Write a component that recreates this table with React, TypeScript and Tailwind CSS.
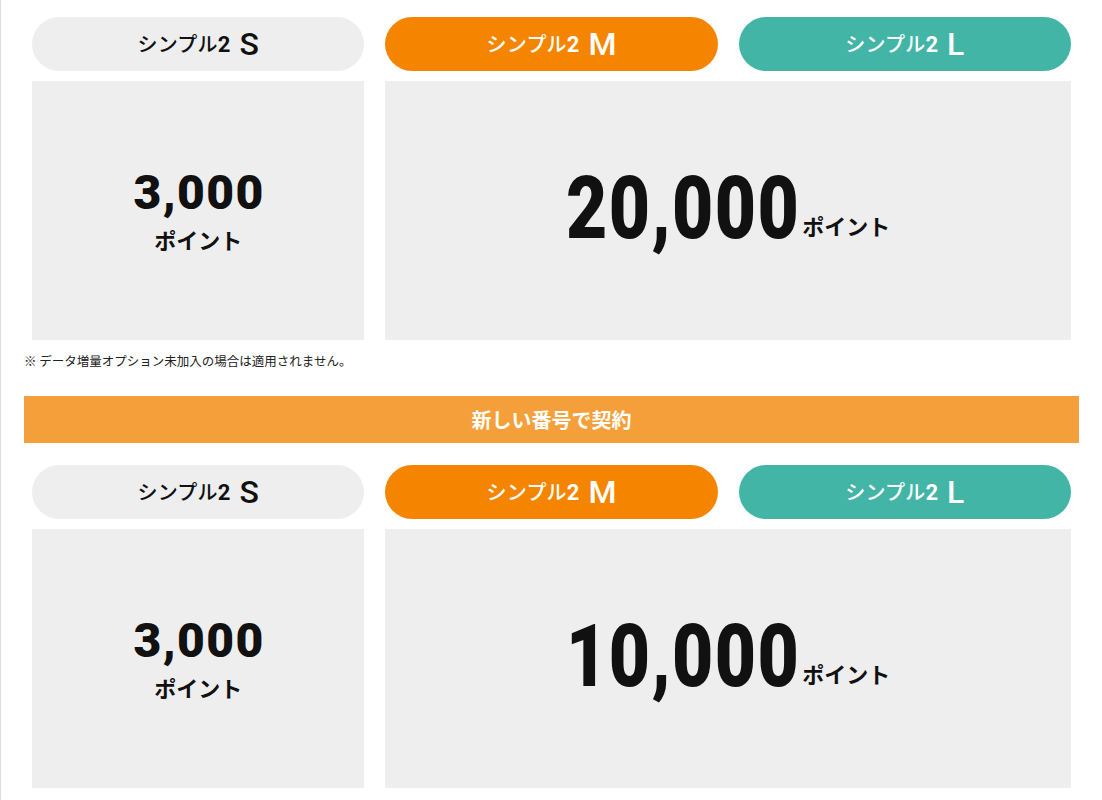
const tabs = [
  { size: "S", className: "bg-[#eeeeee] text-[#111111]" },
  { size: "M", className: "bg-[#f58500] text-white" },
  { size: "L", className: "bg-[#42b5a7] text-white" },
];

const sections = [
  { small: "3,000", large: "20,000", note: true },
  { small: "3,000", large: "10,000", note: false },
];

const jp = "font-['Noto_Sans_CJK_JP',sans-serif]";
const num = "font-['Roboto','Liberation_Sans',sans-serif]";

const PlanTabs = () => (
  <div className="grid grid-cols-3 gap-x-[21px] px-2">
    {tabs.map((tab) => (
      <div
        key={tab.size}
        className={`flex h-[54px] items-center justify-center rounded-full ${tab.className}`}
      >
        <span className={`${jp} text-[20px] font-medium tracking-[0.01em]`}>シンプル</span>
        <span className={`${num} text-[22px] font-bold`}>2</span>
        <span className={`${num} ml-[9px] text-[32px] font-medium leading-none`}>{tab.size}</span>
      </div>
    ))}
  </div>
);

const PointCards = ({ small, large }: { small: string; large: string }) => (
  <div className="mt-[10px] grid grid-cols-3 gap-x-[21px] px-2">
    <div className="flex h-[259px] flex-col items-center justify-center bg-[#eeeeee] pb-[2px] text-[#111111]">
      <span className={`${num} pl-[2px] text-[48px] font-black leading-none tracking-[0.03em]`}>{small}</span>
      <span className={`${jp} mt-[11px] text-[22px] font-bold leading-none`}>ポイント</span>
    </div>
    <div className="col-span-2 flex h-[259px] items-center justify-center bg-[#eeeeee] pb-[6px] text-[#111111]">
      <div className="flex items-baseline">
        <span className="inline-block w-[236px] whitespace-nowrap">
          <span className={`${num} inline-block origin-left scale-x-[0.81] text-[88px] font-black leading-none tracking-[0.02em]`}>
            {large}
          </span>
        </span>
        <span className={`${jp} -translate-y-[3px] text-[22px] font-bold leading-none`}>ポイント</span>
      </div>
    </div>
  </div>
);

export default function App() {
  return (
    <div className="min-h-screen border-l border-[#dddddd] bg-white">
      <div className="px-[23px] pt-[17px] pb-[12px]">
        {sections.map((section, i) => (
          <div key={i}>
            {i > 0 && (
              <div className={`${jp} mt-[26px] mb-[22px] flex h-[47px] items-center justify-center bg-[#f59f3a] text-[20px] font-bold text-white`}>
                新しい番号で契約
              </div>
            )}
            <PlanTabs />
            <PointCards small={section.small} large={section.large} />
            {section.note && (
              <p className={`${jp} mt-[12px] text-[12.5px] leading-[18px] text-[#222222]`}>
                ※ データ増量オプション未加入の場合は適用されません。
              </p>
            )}
          </div>
        ))}
      </div>
    </div>
  );
}
